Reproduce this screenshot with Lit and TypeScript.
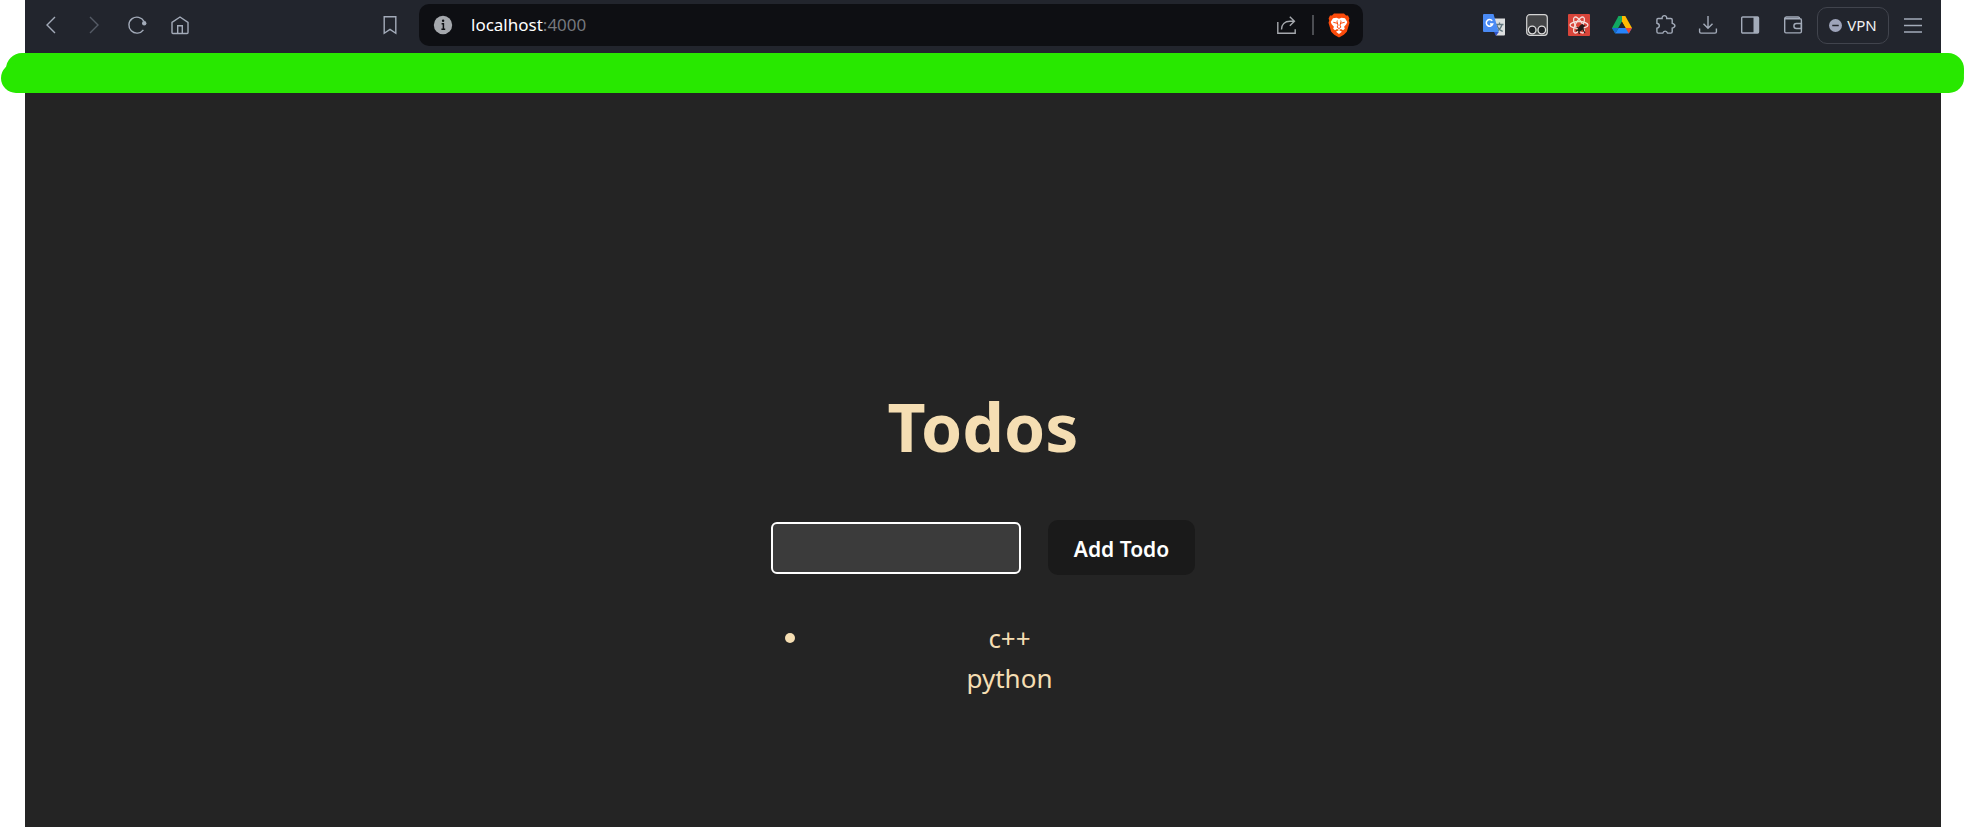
import { LitElement, html, css, svg } from "lit";
import { customElement, property, state } from "lit/decorators.js";

const icons: Record<string, unknown> = {
  back: svg`<path d="M15 3 7 11l8 8" />`,
  forward: svg`<path d="m7 3 8 8-8 8" />`,
  reload: svg`<path d="M17.4 15.8A8 8 0 1 1 18 7.4" /><circle cx="18.2" cy="9.2" r="2.2" fill="currentColor" stroke="none" />`,
  home: svg`<path d="M3 8.3 11 3l8 5.3V18.6a.9.9 0 0 1-.9.9H3.9a.9.9 0 0 1-.9-.9z" /><path d="M8.7 19.2v-7.4h4.6v7.4" />`,
  bookmark: svg`<path d="M5.2 2.7h11.6v16.6L11 15.4l-5.8 3.9z" />`,
  info: svg`<circle cx="11" cy="11" r="9.2" fill="currentColor" stroke="none" /><path d="M9.6 9.8h1.8V15M9.4 15.3h3.8" stroke="#0e0f13" stroke-width="1.5" /><circle cx="11.1" cy="6.8" r="1.2" fill="#0e0f13" stroke="none" />`,
  share: svg`<path d="M2.8 8v11.3h17.4v-4" /><path d="M6.5 15.5c0-5 3.3-8.2 8.5-8.2h4M14.8 2.8l4.6 4.5-4.6 4.5" />`,
  brave: svg`<path d="M6 .6h10l2 2 2-.1 1.4 3-.6 2 .7 2.3-2.7 9-3 3L11 24.4l-4.8-2.6-3-3-2.7-9 .7-2.3-.6-2 1.4-3 2 .1z" fill="#fb4b0b" stroke="none" />
    <path d="m5 5.2 3.5-.4 2.5.9 2.5-.9 3.5.4 2.3 3.7-1 2.3-2.2 2.6.7 2-1.8 1.5-2-1.3-2 1-2-1-2 1.3-1.8-1.5.7-2-2.2-2.6-1-2.3zM11 17.1l3 1.6-3 2.4-3-2.4z" fill="#fff" stroke="none" />
    <path d="m5.3 9.3 4 1M16.7 9.3l-4 1M9.3 7.5l-.3 1.2 1 3.5-.9 1.9L11 15.6l1.9-1.5-.9-1.9 1-3.5-.3-1.2" stroke="#fb4b0b" stroke-width="1" />`,
  translate: svg`<path d="M9 4.5h13v16a1 1 0 0 1-1 1h-8z" fill="#dcdedf" stroke="none" /><path d="M12.5 10.5h8M16.5 8.5v2M19 10.5c-.8 3-3 5.5-5.5 6.8M14 11.5c.8 2.5 3 4.8 5.7 5.9" stroke="#60757d" stroke-width="1.3" /><path d="M1 0h9.5l5.3 18H1a1 1 0 0 1-1-1V1a1 1 0 0 1 1-1z" fill="#4a8af4" stroke="none" /><path d="m11 18 2 4 2.8-4z" fill="#3153c9" stroke="none" /><path d="M9.2 6.9a3.3 3.3 0 1 0 .5 3.1H7" stroke="#fff" stroke-width="1.5" />`,
  tamper: svg`<rect x=".7" y=".7" width="20.6" height="20.6" rx="3" fill="#444547" stroke="#d4d4d4" stroke-width="1.2" /><circle cx="6.2" cy="16" r="3.8" fill="#202126" stroke="#dedede" stroke-width="1.3" /><circle cx="15.8" cy="16" r="3.8" fill="#202126" stroke="#dedede" stroke-width="1.3" />`,
  react: svg`<rect width="22" height="22" rx="1" fill="#d9453a" stroke="none" /><g stroke="#f5dedb" stroke-width="1.3"><ellipse cx="11" cy="11" rx="9" ry="3.5" /><ellipse cx="11" cy="11" rx="9" ry="3.5" transform="rotate(60 11 11)" /><ellipse cx="11" cy="11" rx="9" ry="3.5" transform="rotate(120 11 11)" /></g><ellipse cx="12.8" cy="14" rx="2.2" ry="4.4" transform="rotate(35 12.8 14)" fill="#251817" stroke="none" /><path d="m8.5 13.5 8 1.5M10.5 17.5l1 2.5M8 17l9-5.5M14.5 15l2.5 4" stroke="#251817" stroke-width="1.2" />`,
  drive: svg`<g stroke="none"><path d="M7.5 2 14 2 4.2 19.6 1 14z" fill="#11a861" /><path d="M7.5 2h6.8L11 8z" fill="#078345" /><path d="M7.8 2h6.5L21 14h-6.5z" fill="#ffba00" /><path d="M7.5 2H11L11 8z" fill="#11a861" /><path d="M4.2 19.6 7.5 14H21l-3.2 5.6z" fill="#2684fc" /><path d="M14.5 14H21l-3.2 5.6z" fill="#ea4335" /><path d="M1 14h6.5l-3.3 5.6z" fill="#1967d2" /><path d="m11 8-3.5 6h7z" fill="#22252d" /></g>`,
  puzzle: svg`<path d="M4 4.5h4.1c-.2-1.9.8-2.9 2.3-2.9s2.5 1 2.3 2.9h4.2c.8 0 1.3.5 1.3 1.3v3.5c3.6 1 3.6 3.8 0 4.8v3.7c0 .8-.5 1.3-1.3 1.3h-3.4c-.7-2.7-4-2.7-4.7 0H4.2c-.8 0-1.3-.5-1.3-1.3v-3.5c3.2-.7 3.2-4.3 0-5V5.7c0-.7.4-1.2 1.1-1.2z" />`,
  download: svg`<path d="M11 2v12M6.5 9.7 11 14.2l4.5-4.5M2.6 14.5v3.2c0 .9.5 1.4 1.4 1.4h14c.9 0 1.4-.5 1.4-1.4v-3.2" />`,
  panel: svg`<rect x="2.7" y="3" width="16.8" height="16" rx="1" /><path d="M14.5 3h5v16h-5z" fill="currentColor" stroke="none" />`,
  wallet: svg`<path d="M2.7 4.8c0-1.1.6-1.8 1.7-1.8h11.8c1 0 1.5.7 1.5 1.8M2.7 4.8h15.4c.8 0 1.3.5 1.3 1.3v11.5c0 .8-.5 1.3-1.3 1.3H4c-.8 0-1.3-.5-1.3-1.3z" /><path d="M19.4 9.5h-5a2.3 2.3 0 0 0 0 5h5z" />`,
  vpn: svg`<circle cx="11" cy="11" r="11" fill="#9ea4ba" stroke="none" /><path d="M5.5 11h11" stroke="#22252d" stroke-width="2.5" />`,
  menu: svg`<path d="M2 5h18M2 11.5h18M2 18h18" />`,
};

@customElement("ui-icon")
class UiIcon extends LitElement {
  @property() name = "";
  static styles = css`
    :host { display: block; flex: none; width: 22px; height: 22px; }
    svg { display: block; width: 100%; height: 100%; fill: none; stroke: currentColor; stroke-width: 1.4; }
  `;
  render() {
    return html`<svg viewBox=${this.name === "brave" ? "0 0 22 25" : "0 0 22 22"} aria-hidden="true">${icons[this.name]}</svg>`;
  }
}

@customElement("browser-toolbar")
class BrowserToolbar extends LitElement {
  static styles = css`
    :host {
      display: grid;
      grid-template-columns: 394px minmax(0, 1fr) 578px;
      height: 53px;
      padding-bottom: 3px;
      box-sizing: border-box;
      align-items: center;
      background: #22252d;
      color: #a3abb9;
      font-family: "Noto Sans", sans-serif;
    }
    button { display: block; margin: 0; padding: 0; border: 0; background: none; color: inherit; font: inherit; }
    .nav { display: flex; align-items: center; gap: 21px; padding: 0 18px 0 15px; }
    .nav .mark { margin-left: auto; }
    .off { color: #555b66; }
    .address {
      display: flex;
      align-items: center;
      height: 42px;
      padding: 0 13px;
      box-sizing: border-box;
      border-radius: 10px;
      background: #0e0f13;
      color: #a5a8ad;
    }
    .url { flex: 1; margin-left: 17px; font-size: 17px; line-height: 24px; color: #75787d; text-decoration: none; }
    .host { color: #fff; }
    .rule { width: 2px; height: 20px; margin: 0 14px 0 15px; background: #4b4d52; }
    .brave { width: 22px; height: 25px; }
    .tools { display: flex; align-items: center; justify-content: flex-end; gap: 13px; padding-right: 17px; }
    .ext { display: flex; justify-content: space-between; width: 321px; }
    .vpn {
      display: flex;
      align-items: center;
      justify-content: center;
      gap: 5px;
      width: 72px;
      height: 37px;
      box-sizing: border-box;
      border: 1px solid #41444d;
      border-radius: 10px;
      color: #f0f1f3;
      font-size: 15px;
      line-height: 20px;
    }
    .vpn ui-icon { width: 13px; height: 13px; }
  `;
  render() {
    const btn = (name: string, label: string, cls = "") =>
      html`<button class=${cls} aria-label=${label}><ui-icon name=${name}></ui-icon></button>`;
    return html`
      <nav class="nav">
        ${btn("back", "Back")}${btn("forward", "Forward", "off")}${btn("reload", "Reload")}${btn("home", "Home")}
        ${btn("bookmark", "Bookmark", "mark")}
      </nav>
      <div class="address">
        ${btn("info", "Site information")}
        <a class="url" href="#"><span class="host">localhost</span>:4000</a>
        ${btn("share", "Share")}
        <span class="rule"></span>
        <button aria-label="Shields"><ui-icon class="brave" name="brave"></ui-icon></button>
      </div>
      <div class="tools">
        <div class="ext">
          ${btn("translate", "Translate")}${btn("tamper", "Scripts")}${btn("react", "React tools")}${btn("drive", "Drive")}
          ${btn("puzzle", "Extensions")}${btn("download", "Downloads")}${btn("panel", "Side panel")}${btn("wallet", "Wallet")}
        </div>
        <button class="vpn"><ui-icon name="vpn"></ui-icon>VPN</button>
        ${btn("menu", "Menu")}
      </div>
    `;
  }
}

@customElement("todo-page")
class TodoPage extends LitElement {
  @state() private items = ["c++", "python"];
  static styles = css`
    :host {
      display: flex;
      flex-direction: column;
      align-items: center;
      padding: 287px 24px 24px;
      box-sizing: border-box;
      background: #242424;
      color: #f5deb3;
      font-family: "Noto Sans", sans-serif;
      font-size: 26px;
      line-height: 40px;
    }
    h1 { margin: 0 0 48px; font-size: 66px; line-height: 92px; font-weight: 700; }
    form { display: flex; align-items: center; gap: 27px; }
    input {
      width: 250px;
      height: 52px;
      box-sizing: border-box;
      padding: 0 12px;
      border: 2px solid #fff;
      border-radius: 6px;
      background: #3b3b3b;
      color: #fff;
      font: inherit;
      outline: none;
    }
    button {
      height: 55px;
      margin: 0;
      padding: 2px 26px 0;
      border: 0;
      border-radius: 10px;
      background: #1a1a1a;
      color: #fff;
      font-family: inherit;
      font-size: 21px;
      font-weight: 600;
      white-space: nowrap;
    }
    .list { width: 426px; margin: 43px 0 0; padding: 0 0 0 53px; box-sizing: border-box; list-style: none; text-align: center; }
    .group { display: grid; grid-template-columns: 1fr; position: relative; }
    .group::before {
      content: "";
      position: absolute;
      left: -38px;
      top: 15px;
      width: 10px;
      height: 10px;
      border-radius: 50%;
      background: currentColor;
    }
  `;
  private add(e: Event) {
    e.preventDefault();
    const field = this.renderRoot.querySelector("input")!;
    if (field.value.trim()) this.items = [...this.items, field.value.trim()];
    field.value = "";
  }
  render() {
    return html`
      <h1>Todos</h1>
      <form @submit=${this.add}>
        <input type="text" aria-label="New todo" />
        <button>Add Todo</button>
      </form>
      <ul class="list">
        <li class="group">${this.items.map((t) => html`<span>${t}</span>`)}</li>
      </ul>
    `;
  }
}

@customElement("app-root")
class AppRoot extends LitElement {
  static styles = css`
    :host { display: flex; flex-direction: column; min-height: 100vh; background: #fff; }
    browser-toolbar, todo-page { margin: 0 24px 0 25px; }
    todo-page { flex: 1; }
    .band { display: grid; background: linear-gradient(#28e800, #28e800) center / calc(100% - 60px) 100% no-repeat; }
    .band span { grid-area: 1 / 1; background: #28e800; }
    .upper { height: 36px; margin: 0 1px 0 6px; border-radius: 16px; }
    .lower { height: 30px; margin: 10px 1px 0; border-radius: 15px; }
  `;
  render() {
    return html`
      <browser-toolbar></browser-toolbar>
      <div class="band"><span class="upper"></span><span class="lower"></span></div>
      <todo-page></todo-page>
    `;
  }
}
